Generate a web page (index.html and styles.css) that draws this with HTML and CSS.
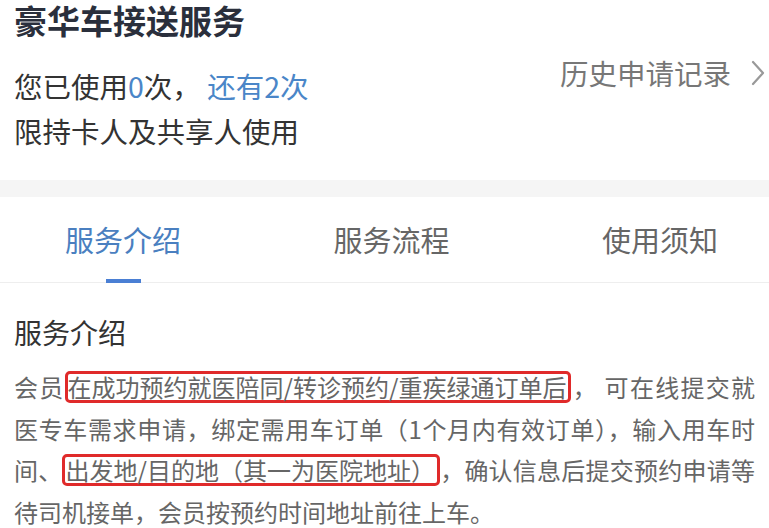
FILE: index.html
```html
<!DOCTYPE html>
<html lang="zh-CN">
<head>
  <meta charset="UTF-8" />
  <meta name="viewport" content="width=device-width, initial-scale=1.0"/>
  <title>豪华车接送服务</title>
  <link rel="stylesheet" href="styles.css">
</head>
<body>
  <div class="header">
    <h1 class="title">豪华车接送服务</h1>
    <div class="info">
      <div class="usage">
        <div>您已使用<span class="blue">0</span>次， <span class="blue">还有2次</span></div>
        <div>限持卡人及共享人使用</div>
      </div>
      <a class="history" href="#">历史申请记录
        <svg class="chevron" width="14" height="26" viewBox="0 0 14 26">
          <path d="M2 2 L12 13 L2 24" fill="none" stroke="#999" stroke-width="2.2" stroke-linecap="round" stroke-linejoin="round"/>
        </svg>
      </a>
    </div>
  </div>

  <div class="band"></div>

  <div class="tabs">
    <div class="tab active">服务介绍</div>
    <div class="tab">服务流程</div>
    <div class="tab">使用须知</div>
  </div>

  <div class="section">
    <h2 class="section-title">服务介绍</h2>
    <p class="desc">会员<span class="mark">在成功预约就医陪同/转诊预约/重疾绿通订单后</span>， 可在线提交就医专车需求申请，绑定需用车订单（1个月内有效订单），输入用车时间、<span class="mark">出发地/目的地（其一为医院地址）</span>，确认信息后提交预约申请等待司机接单，会员按预约时间地址前往上车。</p>
  </div>
</body>
</html>
```

FILE: styles.css
```css
body {
  margin: 0;
  background: #fff;
  font-family: "Noto Sans CJK SC", "Noto Sans", sans-serif;
  color: #333;
}
.header {
  padding: 0 14px 27px;
}
.title {
  margin: 0;
  font-size: 33px;
  line-height: 40px;
  font-weight: bold;
  color: #2a2f3c;
}
.info {
  display: flex;
  justify-content: space-between;
  align-items: flex-start;
  margin-top: 13px;
}
.usage {
  padding-top: 10px;
  font-size: 28.5px;
  line-height: 45px;
  color: #333;
}
.blue {
  color: #4a86c8;
}
.history {
  display: flex;
  align-items: center;
  gap: 20px;
  font-size: 28.5px;
  line-height: 40px;
  color: #777;
  text-decoration: none;
  margin-right: -10px;
}
.band {
  height: 17px;
  background: #f5f5f5;
}
.tabs {
  display: flex;
  justify-content: space-between;
  padding: 0 51px 0 65px;
  border-bottom: 1px solid #eee;
}
.tab {
  position: relative;
  height: 85px;
  line-height: 85px;
  font-size: 29px;
  color: #666;
}
.tab.active {
  color: #4a7fc0;
}
.tab.active::after {
  content: "";
  position: absolute;
  left: 50%;
  bottom: -1px;
  width: 35px;
  height: 4px;
  margin-left: -17px;
  background: #4a7fd4;
}
.section {
  padding: 29px 14px 0;
}
.section-title {
  margin: 0;
  font-size: 28px;
  line-height: 40px;
  font-weight: normal;
  color: #333;
}
.desc {
  margin: 14px 0 0;
  font-size: 24px;
  line-height: 41.5px;
  color: #666;
  text-align: justify;
  text-justify: inter-word;
}
.mark {
  display: inline-block;
  line-height: 26px;
  border: 3px solid #e02a2a;
  border-radius: 5px;
  padding: 0 2px 0 0;
}
```
